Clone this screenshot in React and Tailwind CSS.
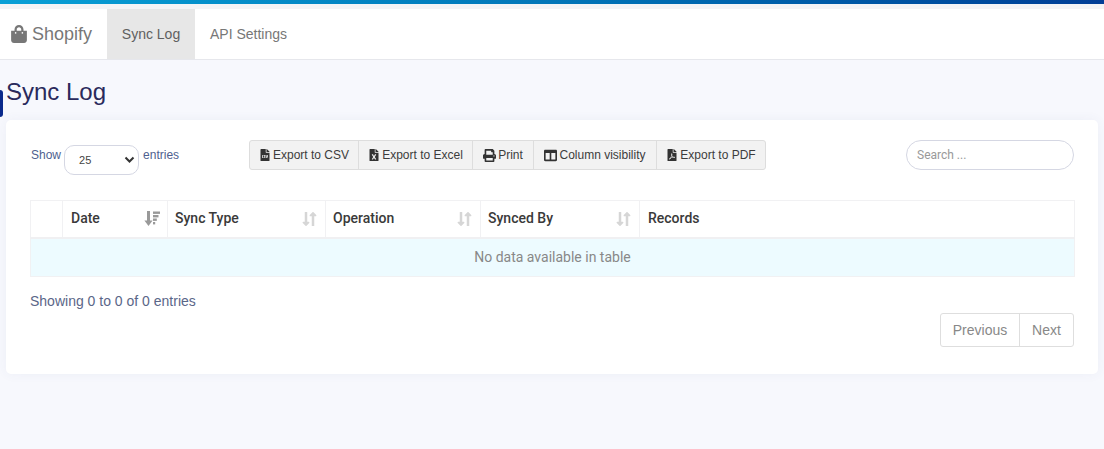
import React from "react";
import { FaShoppingBag, FaFileCsv, FaFileExcel, FaPrint, FaColumns, FaFilePdf, FaLongArrowAltDown, FaLongArrowAltUp } from "react-icons/fa";

const buttons = [
  [FaFileCsv, "Export to CSV", "w-[109px]", "text-[12px]"],
  [FaFileExcel, "Export to Excel", "w-[114px]", "text-[12px]"],
  [FaPrint, "Print", "w-[61px]", "text-[13px]"],
  [FaColumns, "Column visibility", "w-[123px]", "text-[13px]"],
  [FaFilePdf, "Export to PDF", "w-[108px]", "text-[12px]"],
];

function SortIcon() {
  return (
    <span className="flex items-center text-[#d6d6d6] -mr-[3px]">
      <FaLongArrowAltDown className="text-[16px]" />
      <FaLongArrowAltUp className="text-[16px] -ml-[9px]" />
    </span>
  );
}

function DateSort() {
  return (
    <svg width="16" height="15" viewBox="0 0 16 15" className="text-[#999]" fill="currentColor">
      <path d="M3 0h3v9.5h2.6L4.5 15 .4 9.5H3z" />
      <rect x="9" y="0.5" width="7" height="2.4" />
      <rect x="9" y="4" width="5.5" height="2.4" />
      <rect x="9" y="7.5" width="3.8" height="2.4" />
      <rect x="9" y="11" width="2.2" height="2.4" />
    </svg>
  );
}

function Th({ w, children, sort, pl = "pl-2" }) {
  return (
    <th className={`${w} ${pl} h-[37px] border-r border-[#f1f1f3] last:border-r-0 p-0 text-left font-medium text-[14px] text-[#3a3a3a] align-middle`}>
      <div className="flex items-center justify-between pr-[7px]">
        <span>{children}</span>
        {sort}
      </div>
    </th>
  );
}

export default function App() {
  return (
    <div className="min-h-[449px] bg-[#f7f8fd] font-['Liberation_Sans',sans-serif] overflow-hidden relative">
      <div className="h-1 bg-gradient-to-r from-[#0aa0d6] via-[#0276b8] to-[#023e96]" />
      <div className="h-[5px] bg-[#f4f4f6]" />
      <nav className="h-[51px] bg-white border-b border-[#e6e7ec] flex items-stretch">
        <div className="flex items-center pl-[10px] w-[107px] text-[18px] text-[#777]">
          <FaShoppingBag className="text-[18px] mr-[4px]" />
          <span>Shopify</span>
        </div>
        <div className="w-[88px] bg-[#e7e7e7] flex items-center justify-center text-[14px] text-[#606060]">Sync Log</div>
        <div className="pl-[15px] flex items-center text-[14px] text-[#777]">API Settings</div>
      </nav>

      <div className="absolute left-0 top-[90px] w-[3px] h-[27px] bg-[#0a2a8c] rounded-r-[3px]" />

      <h1 className="pl-[6px] pt-1 h-[60px] flex items-center text-[24px] text-[#2a2a5c]">Sync Log</h1>

      <section className="mx-1.5 bg-white rounded-[5px] shadow-[0_0_12px_rgba(70,80,130,0.06)] pl-6 pr-[23px] pt-5 pb-[27px]">
        <div className="flex items-start h-[35px] mb-[25px] pr-px">
          <div className="w-[219px] flex items-start text-[12px] text-[#4f5f8f] pt-[5px] pl-px">
            <span className="leading-[20px] mr-[3px]">Show</span>
            <div className="w-[75px] h-[30px] rounded-[10px] border border-[#d5d7e3] bg-white flex items-center justify-between pl-[14px] pr-[3px] text-[11px] text-[#444]">
              <span>25</span>
              <svg width="11" height="8" viewBox="0 0 11 8"><path d="M1.5 1.5 L5.5 5.5 L9.5 1.5" fill="none" stroke="#333" strokeWidth="2" /></svg>
            </div>
            <span className="leading-[20px] ml-1">entries</span>
          </div>
          <div className="flex h-[30px] rounded-[3px] border border-[#ddd] bg-[#f2f2f2] text-[12px] text-[#3c3c3c]">
            {buttons.map(([Icon, label, w, size]) => (
              <div key={label} className={`${w} flex items-center justify-center gap-[2px] border-r border-[#ddd] last:border-r-0 whitespace-nowrap`}>
                <Icon className={`${size} text-[#333]`} />
                <span>{label}</span>
              </div>
            ))}
          </div>
          <div className="ml-auto w-[168px] h-[30px] rounded-full border border-[#d5d7e3] flex items-center pl-[10px] font-['Roboto',sans-serif] text-[12px] text-[#999]">
            Search ...
          </div>
        </div>

        <table className="w-[1045px] table-fixed border-collapse border border-[#f1f1f3] font-['Roboto',sans-serif]">
          <thead>
            <tr className="border-b-2 border-[#f0f0f2]">
              <Th w="w-[32px]" />
              <Th w="w-[105px]" sort={<DateSort />}>Date</Th>
              <Th w="w-[158px]" pl="pl-[7px]" sort={<SortIcon />}>Sync Type</Th>
              <Th w="w-[155px]" pl="pl-[7px]" sort={<SortIcon />}>Operation</Th>
              <Th w="w-[159px]" pl="pl-[7px]" sort={<SortIcon />}>Synced By</Th>
              <Th w="">Records</Th>
            </tr>
          </thead>
          <tbody>
            <tr>
              <td colSpan={6} className="h-[39px] bg-[#edfbff] text-center text-[14px] text-[#888]">No data available in table</td>
            </tr>
          </tbody>
        </table>

        <div className="mt-[14px] text-[14px] leading-[21px] text-[#5a6688]">Showing 0 to 0 of 0 entries</div>

        <div className="flex justify-end mt-px pr-px">
          <div className="flex h-[34px] rounded-[3px] border border-[#dedede] text-[14px] text-[#888]">
            <div className="w-[79px] flex items-center justify-center border-r border-[#dedede]">Previous</div>
            <div className="w-[53px] flex items-center justify-center">Next</div>
          </div>
        </div>
      </section>
    </div>
  );
}
